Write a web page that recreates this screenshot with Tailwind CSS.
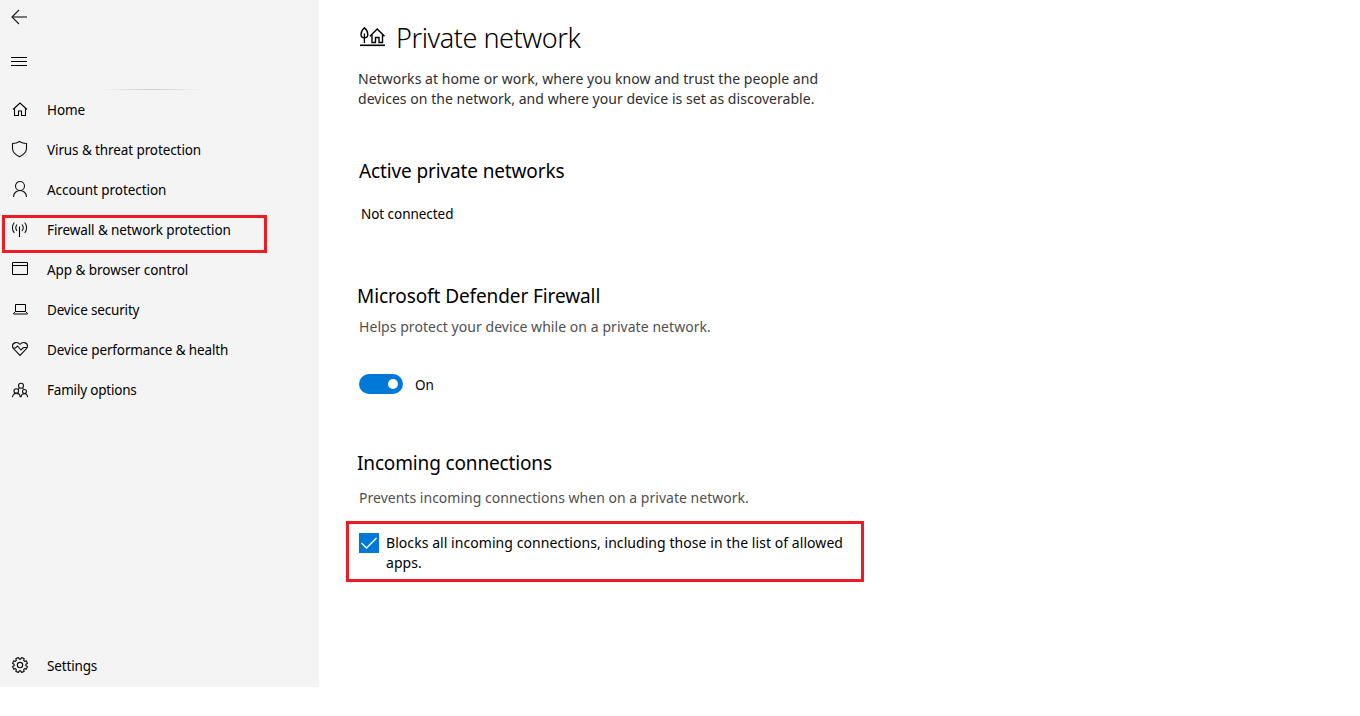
<!DOCTYPE html>
<html lang="en">
<head>
<meta charset="utf-8">
<title>Private network</title>
<script src="https://cdn.jsdelivr.net/npm/@tailwindcss/browser@4"></script>
</head>
<body class="overflow-hidden bg-white font-['Noto_Sans','Open_Sans',sans-serif] text-black">
<div class="flex h-[716px] w-[1360px]">
  <aside class="flex h-[687px] w-[319px] shrink-0 flex-col bg-[#f4f4f4] pb-px">
    <svg class="ml-[11px] mt-[9px] shrink-0" width="17" height="16" fill="none"><path d="M16 8H1" stroke="#777" stroke-width="2"/><path d="M8 1 1 8l7 7" stroke="#222" stroke-width="1.2"/></svg>
    <svg class="mt-8 ml-[11px] shrink-0" width="16" height="9" fill="none" stroke="#000"><path d="M0 .5h16M0 4.500h16M0 8.500h16"/></svg>
    <div class="mt-[23px] ml-[100px] h-px w-[104px] shrink-0 bg-linear-to-r from-transparent via-[#ccc] to-transparent"></div>
    <nav class="flex grow flex-col text-[13.5px] tracking-[-0.1px]">
      <a class="flex h-10 items-center gap-[17px] pl-2.5">
        <svg width="20" height="20" fill="none" stroke="#000" stroke-width="1.1"><path d="M3 9.500 10 3l7 6.500M4.500 8.500v7h4v-4.500h3v4.500h4v-7"/></svg>
        <span>Home</span>
      </a>
      <a class="flex h-10 items-center gap-[17px] pl-2.5">
        <svg width="20" height="20" fill="none" stroke="#111" stroke-width="1.1"><path d="M9.500 1.500C7.500 2.800 5 3.500 2.500 3.500v5c0 4 3.500 6.500 7 8.300 3.500-1.800 7-4.300 7-8.300v-5c-2.500 0-5-.7-7-2z"/></svg>
        <span>Virus &amp; threat protection</span>
      </a>
      <a class="flex h-10 items-center gap-[17px] pl-2.5">
        <svg width="20" height="20" fill="none" stroke="#111" stroke-width="1.1"><circle cx="10" cy="6" r="4.500"/><path d="M3.500 17c0-4 3-6.500 6.500-6.500s6.500 2.500 6.500 6.500"/></svg>
        <span class="tracking-[-0.06px]">Account protection</span>
      </a>
      <a class="relative flex h-10 items-center gap-[17px] pl-2.5">
        <svg width="20" height="20" fill="none" stroke="#111" stroke-width="1.100"><path d="M9.500 6.500V17" stroke="#000"/><path d="M4.300 2.500c-2.500 3-2.500 7.500 0 10.500M7 4.500c-1.500 2-1.500 4.500 0 6.500M14.700 2.500c2.500 3 2.500 7.500 0 10.500M12 4.500c1.500 2 1.500 4.500 0 6.500"/></svg>
        <span>Firewall &amp; network protection</span>
        <span class="absolute top-[5px] left-[2px] h-[38px] w-[265px] border-3 border-[#ed1c24]"></span>
      </a>
      <a class="flex h-10 items-center gap-[17px] pl-2.5">
        <svg width="20" height="20" fill="none" stroke="#000"><path d="M2.500 2.500h15v12h-15zM2.500 5.500h15"/></svg>
        <span class="tracking-[-0.05px]">App &amp; browser control</span>
      </a>
      <a class="flex h-10 items-center gap-[17px] pl-2.5">
        <svg width="20" height="20" fill="none" stroke="#000"><path d="M5.500 11.500v-7h10v7M5.500 11.500h10l2 2v.5h-14v-.5z"/></svg>
        <span class="tracking-[-0.17px]">Device security</span>
      </a>
      <a class="flex h-10 items-center gap-[17px] pl-2.5">
        <svg width="20" height="20" fill="none" stroke="#111" stroke-width="1.100"><path d="M10 4.500C8 1.500 2.500 2 2.500 6.200c0 1.500.8 2.300 1.500 3l6 6.300 6-6.300c.7-.7 1.500-1.500 1.500-3C17.500 2 12 1.500 10 4.500M3 8h2.500l2-2 3.500 4 2.500-2.500H17"/></svg>
        <span class="tracking-[-0.13px]">Device performance &amp; health</span>
      </a>
      <a class="flex h-10 items-center gap-[17px] pl-2.5">
        <svg width="20" height="20" fill="none" stroke="#111" stroke-width="1.100"><circle cx="11" cy="5.800" r="2.500"/><circle cx="6.300" cy="11" r="2.300"/><circle cx="14.500" cy="11.500" r="2"/><path d="M2.500 17.200c0-2.500 1.700-3.800 3.800-3.800s3.900 1.300 3.900 3.800M11 17.200c.2-2.200 1.500-3.500 3.400-3.500s3.100 1.400 3.200 3.500M8.300 9.500l1-1.600M13.500 9.300l-.9-1.300"/></svg>
        <span class="tracking-[-0.2px]">Family options</span>
      </a>
      <a class="mt-auto flex h-10 items-center gap-[17px] pl-2.5">
        <svg width="20" height="20" fill="none" stroke="#111" stroke-width="1.150"><g transform="translate(10 9)"><circle r="2.700"/><path stroke-linejoin="round" d="M.72-5.860 1.580-7.430 4.140-6.370 3.630-4.650 4.650-3.630 6.370-4.140 7.430-1.580 5.860-.72V.72L7.430 1.580 6.370 4.140 4.650 3.630 3.630 4.650 4.140 6.370 1.580 7.430 .72 5.860H-.72L-1.580 7.430-4.140 6.370-3.630 4.650-4.650 3.630-6.370 4.140-7.430 1.580-5.860 .72V-.72L-7.430-1.580-6.370-4.140-4.650-3.630-3.630-4.650-4.140-6.370-1.580-7.430-.72-5.860z"/></g></svg>
        <span class="tracking-[-0.15px]">Settings</span>
      </a>
    </nav>
  </aside>

  <main class="flex flex-col pt-[18px] pl-[38px]">
    <h1 class="flex h-10 items-center gap-2.5 pl-[3px] text-[27px] leading-10 font-[350] tracking-[-0.45px]">
      <svg class="-mt-[3px]" width="26" height="20" fill="none" stroke="#000" stroke-width="1.400"><path d="M0 18.300h25" stroke-width="1.600"/><path d="M4.400.8C2.500 2.500 1 5 1 7.500a3.400 3.400 0 0 0 6.800 0C7.800 5 6.400 2.500 4.400.8zM4.400 6.500V16"/><path d="M10 9.300 17.200 2l7.300 7.300M12 7.500v8h3.500v-5H19v5h3.500v-8"/></svg>
      <span>Private network</span>
    </h1>
    <p class="mt-[11px] pl-px text-[14px] leading-5 tracking-[0.045px] text-[#2e2e2e]">Networks at home or work, where you know and trust the people and<br>devices on the network, and where your device is set as discoverable.</p>

    <h2 class="mt-12 pl-0.5 text-[19px] leading-7 tracking-[-0.13px]">Active private networks</h2>
    <p class="mt-[19px] pl-1 text-[13.5px] leading-5 tracking-[-0.05px]">Not connected</p>

    <h2 class="mt-[58px] text-[19px] leading-7 tracking-[-0.1px]">Microsoft Defender Firewall</h2>
    <p class="mt-[7px] pl-0.5 text-[14px] leading-5 tracking-[0.055px] text-[#505050]">Helps protect your device while on a private network.</p>
    <div class="mt-[37px] flex h-5 items-center gap-3 pl-0.5">
      <span class="flex h-5 w-11 items-center justify-end rounded-full bg-[#0078d7] pr-[5px]"><span class="size-2.5 rounded-full bg-white"></span></span>
      <span class="mt-0.5 text-[13.5px] leading-5">On</span>
    </div>

    <h2 class="mt-[55px] text-[19px] leading-7 tracking-[-0.15px]">Incoming connections</h2>
    <p class="mt-[11px] pl-0.5 text-[14px] leading-5 tracking-[0.02px] text-[#505050]">Prevents incoming connections when on a private network.</p>
    <div class="mt-[13px] -ml-[11px] flex h-[61px] w-[518px] gap-[7px] border-3 border-[#ed1c24] pt-[9px] pl-2.5">
      <span class="flex size-5 shrink-0 bg-[#0078d7]"><svg width="20" height="20" fill="none" stroke="#fff" stroke-width="1.300"><path d="m2.500 10 5 5L17.500 5"/></svg></span>
      <p class="text-[14px] leading-5 tracking-[0.06px] whitespace-nowrap">Blocks all incoming connections, including those in the list of allowed<br>apps.</p>
    </div>
  </main>
</div>
</body>
</html>
